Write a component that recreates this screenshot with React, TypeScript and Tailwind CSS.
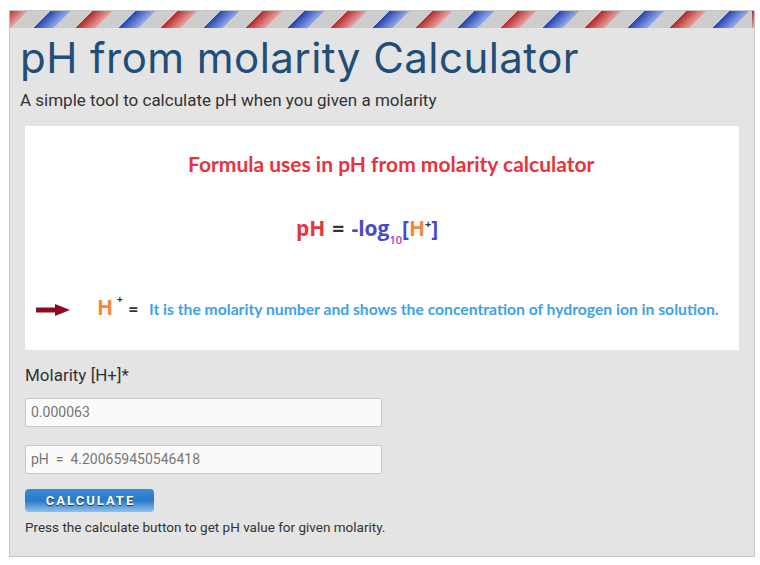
import React from "react";

function Arrow() {
  return (
    <svg width="34" height="12" viewBox="0 0 34 12" className="block mt-[6px]">
      <rect x="0" y="3.5" width="21" height="5" fill="#8a0c1e" />
      <polygon points="19,0 34,6 19,12" fill="#8a0c1e" />
    </svg>
  );
}

export default function App() {
  return (
    <div className="bg-white w-[760px] h-[565px] pt-[10px] pl-[9px]">
      <div className="w-[746px] h-[547px] border border-[#c6c6c6] bg-[#e4e4e4] flex flex-col">
        <div className="h-[17px] shrink-0 bg-[#cdcdcd] bg-[repeating-linear-gradient(135deg,#b52a2a_0px,#e8a3a3_14px,transparent_14px,transparent_30px,#2444b0_30px,#93a9e8_44px,transparent_44px,transparent_60px)] bg-[position:-2px_0px]" />
        <div className="pl-[10px] pr-[15px]">
          <h1 className="mt-[6px] text-[42px] leading-[48px] text-[#1f4e79] font-normal tracking-[0.45px] [font-family:Inter,'Noto_Sans',sans-serif]">
            pH from molarity Calculator
          </h1>
          <p className="mt-[7px] text-[17px] leading-[22px] text-[#333333] [font-family:Roboto,sans-serif]">
            A simple tool to calculate pH when you given a molarity
          </p>
          <div className="mt-[15px] ml-[5px] w-[714px] h-[224px] bg-white flex flex-col">
            <div className="pt-[26px] pl-[163px] text-[21px] leading-[24px] font-bold text-[#e8323c] [font-family:Lato,sans-serif]">
              Formula uses in pH from molarity calculator
            </div>
            <div className="mt-[38px] pl-[271px] flex items-baseline text-[21px] leading-[28px] font-bold [font-family:'Open_Sans',sans-serif]">
              <span className="text-[#e8323c]">pH</span>
              <span className="text-[#333] mx-[7px]">=</span>
              <span className="text-[#4a4ac4]">-log</span>
              <span className="text-[#b43cc0] text-[11px] relative top-[8px] font-semibold">10</span>
              <span className="text-[#4a4ac4]">[</span>
              <span className="text-[#f5893b]">H</span>
              <span className="text-[#333] text-[11px] relative -top-[8px]">+</span>
              <span className="text-[#4a4ac4]">]</span>
            </div>
            <div className="mt-[47px] pl-[11px] flex items-center">
              <Arrow />
              <div className="ml-[27px] flex items-baseline [font-family:'Open_Sans',sans-serif] font-bold">
                <span className="text-[#f5893b] text-[21px] leading-[28px]">H</span>
                <span className="text-[#333] text-[10px] relative -top-[12px] ml-[4px]">+</span>
                <span className="text-[#333] text-[16px] ml-[6px]">=</span>
                <span className="ml-[11px] text-[#3da2ea] text-[15.7px] [font-family:Lato,sans-serif]">
                  It is the molarity number and shows the concentration of hydrogen ion in solution.
                </span>
              </div>
            </div>
          </div>
          <div className="ml-[5px]">
            <label className="block mt-[15px] text-[17px] leading-[20px] text-[#333333] [font-family:Roboto,sans-serif]">
              Molarity [H+]*
            </label>
            <div className="mt-[13px] w-[357px] h-[29px] border border-[#c9c9c9] rounded-[2px] bg-[#fafafa] flex items-center pl-[5px] text-[14px] text-[#777777] [font-family:Roboto,sans-serif]">
              0.000063
            </div>
            <div className="mt-[18px] w-[357px] h-[29px] border border-[#c9c9c9] rounded-[2px] bg-[#fafafa] flex items-center pl-[5px] text-[14px] text-[#777777] whitespace-pre [font-family:Roboto,sans-serif]">
              {"pH  =  4.200659450546418"}
            </div>
            <button className="mt-[15px] w-[129px] h-[23px] rounded-[4px] bg-[linear-gradient(to_bottom,#3b88d6,#2a7acb_50%,#8ec2ee)] text-white text-[13px] font-bold tracking-[2px] [text-shadow:0_1px_1px_#1a3050] [font-family:Roboto,sans-serif] flex items-center justify-center pl-[2px]">
              CALCULATE
            </button>
            <p className="mt-[5px] text-[13.5px] leading-[20px] text-[#333333] [font-family:Roboto,sans-serif]">
              Press the calculate button to get pH value for given molarity.
            </p>
          </div>
        </div>
      </div>
    </div>
  );
}
